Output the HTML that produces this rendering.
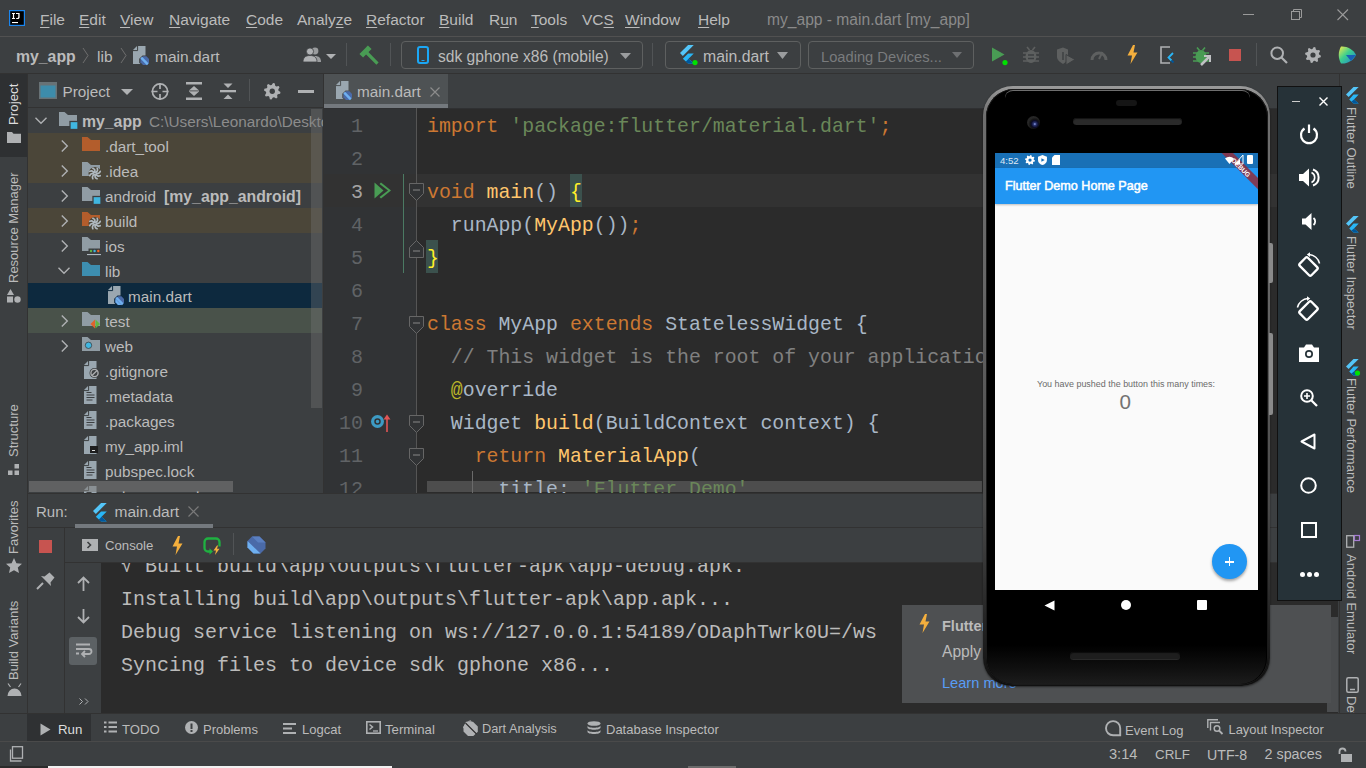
<!DOCTYPE html>
<html><head><meta charset="utf-8">
<style>
*{box-sizing:border-box;margin:0;padding:0}
html,body{width:1366px;height:768px;overflow:hidden;background:#3c3f41;font-family:"Liberation Sans",sans-serif;color:#bbbbbb;position:relative}
.a{position:absolute}
.t{position:absolute;white-space:pre;line-height:1}
.mono{font-family:"Liberation Mono",monospace}
svg{position:absolute;overflow:visible}
</style></head><body>
<div class="a" style="left:0px;top:0px;width:1366px;height:36px;background:#3c3f41;"></div>
<div class="a" style="left:0px;top:36px;width:1366px;height:1px;background:#515151;"></div>
<div class="a" style="left:0px;top:37px;width:1366px;height:36px;background:#3c3f41;"></div>
<div class="a" style="left:0px;top:73px;width:1366px;height:1px;background:#323232;"></div>
<div class="a" style="left:0px;top:74px;width:27px;height:639px;background:#3c3f41;"></div>
<div class="a" style="left:0px;top:74px;width:27px;height:83px;background:#2e3032;"></div>
<div class="a" style="left:27px;top:74px;width:1px;height:639px;background:#323232;"></div>
<div class="a" style="left:28px;top:74px;width:295px;height:419px;background:#3c3f41;"></div>
<div class="a" style="left:28px;top:107px;width:295px;height:1px;background:#323232;"></div>
<div class="a" style="left:323px;top:74px;width:1px;height:420px;background:#323232;"></div>
<div class="a" style="left:324px;top:74px;width:1014px;height:34px;background:#3c3f41;"></div>
<div class="a" style="left:324px;top:108px;width:93px;height:385px;background:#313335;"></div>
<div class="a" style="left:417px;top:108px;width:921px;height:385px;background:#2b2b2b;"></div>
<div class="a" style="left:28px;top:493px;width:1311px;height:1px;background:#323232;"></div>
<div class="a" style="left:28px;top:494px;width:1311px;height:33px;background:#3c3f41;"></div>
<div class="a" style="left:28px;top:527px;width:1310px;height:1px;background:#323232;"></div>
<div class="a" style="left:28px;top:528px;width:36px;height:185px;background:#3c3f41;"></div>
<div class="a" style="left:64px;top:528px;width:1px;height:185px;background:#323232;"></div>
<div class="a" style="left:65px;top:528px;width:1273px;height:34px;background:#3c3f41;"></div>
<div class="a" style="left:65px;top:562px;width:1273px;height:1px;background:#323232;"></div>
<div class="a" style="left:65px;top:563px;width:36px;height:150px;background:#3c3f41;"></div>
<div class="a" style="left:101px;top:563px;width:1237px;height:150px;background:#2b2b2b;"></div>
<div class="a" style="left:0px;top:713px;width:1366px;height:1px;background:#323232;"></div>
<div class="a" style="left:0px;top:714px;width:1366px;height:27px;background:#3c3f41;"></div>
<div class="a" style="left:0px;top:741px;width:1366px;height:1px;background:#4a4a4a;"></div>
<div class="a" style="left:0px;top:742px;width:1366px;height:26px;background:#3c3f41;"></div>
<div class="a" style="left:1339px;top:74px;width:1px;height:639px;background:#323232;"></div>
<div class="a" style="left:1340px;top:74px;width:26px;height:639px;background:#3c3f41;"></div>
<div class="a" style="left:0px;top:766px;width:48px;height:2px;background:#2b2b2b;"></div>
<div class="a" style="left:48px;top:766px;width:344px;height:2px;background:#f0f0f0;"></div>
<div class="a" style="left:688px;top:766px;width:48px;height:2px;background:#6b6b6b;"></div>
<svg style="left:9px;top:10px;" width="16" height="16" viewBox="0 0 16 16"><rect x="0.6" y="0.6" width="14.8" height="14.8" fill="#000" stroke="#1a86f0" stroke-width="1.2"/><path d="M3 3h3v1.1h-0.9v3.8h0.9V9H3V7.9h0.9V4.1H3z" fill="#fff"/><path d="M7 3h3.6v4.3c0 1.2-0.7 1.8-1.9 1.8H7.2V7.9h1.3c0.6 0 0.8-0.3 0.8-0.8V4.1H7z" fill="#fff"/><rect x="3" y="12" width="6" height="1.1" fill="#fff"/></svg>
<div class="t " style="left:40px;top:11.88px;font-size:15.5px;color:#bbbbbb;font-weight:normal;"><u style="text-decoration-thickness:1px;text-underline-offset:2px">F</u>ile</div>
<div class="t " style="left:79px;top:11.88px;font-size:15.5px;color:#bbbbbb;font-weight:normal;"><u style="text-decoration-thickness:1px;text-underline-offset:2px">E</u>dit</div>
<div class="t " style="left:120px;top:11.88px;font-size:15.5px;color:#bbbbbb;font-weight:normal;"><u style="text-decoration-thickness:1px;text-underline-offset:2px">V</u>iew</div>
<div class="t " style="left:169px;top:11.88px;font-size:15.5px;color:#bbbbbb;font-weight:normal;"><u style="text-decoration-thickness:1px;text-underline-offset:2px">N</u>avigate</div>
<div class="t " style="left:246px;top:11.88px;font-size:15.5px;color:#bbbbbb;font-weight:normal;"><u style="text-decoration-thickness:1px;text-underline-offset:2px">C</u>ode</div>
<div class="t " style="left:297px;top:11.88px;font-size:15.5px;color:#bbbbbb;font-weight:normal;">Analy<u style="text-decoration-thickness:1px;text-underline-offset:2px">z</u>e</div>
<div class="t " style="left:366px;top:11.88px;font-size:15.5px;color:#bbbbbb;font-weight:normal;"><u style="text-decoration-thickness:1px;text-underline-offset:2px">R</u>efactor</div>
<div class="t " style="left:439px;top:11.88px;font-size:15.5px;color:#bbbbbb;font-weight:normal;"><u style="text-decoration-thickness:1px;text-underline-offset:2px">B</u>uild</div>
<div class="t " style="left:489px;top:11.88px;font-size:15.5px;color:#bbbbbb;font-weight:normal;">R<u style="text-decoration-thickness:1px;text-underline-offset:2px">u</u>n</div>
<div class="t " style="left:531px;top:11.88px;font-size:15.5px;color:#bbbbbb;font-weight:normal;"><u style="text-decoration-thickness:1px;text-underline-offset:2px">T</u>ools</div>
<div class="t " style="left:582px;top:11.88px;font-size:15.5px;color:#bbbbbb;font-weight:normal;">VC<u style="text-decoration-thickness:1px;text-underline-offset:2px">S</u></div>
<div class="t " style="left:625px;top:11.88px;font-size:15.5px;color:#bbbbbb;font-weight:normal;"><u style="text-decoration-thickness:1px;text-underline-offset:2px">W</u>indow</div>
<div class="t " style="left:698px;top:11.88px;font-size:15.5px;color:#bbbbbb;font-weight:normal;"><u style="text-decoration-thickness:1px;text-underline-offset:2px">H</u>elp</div>
<div class="t " style="left:767px;top:11.79px;font-size:15.6px;color:#8a8a8a;font-weight:normal;">my_app - main.dart [my_app]</div>
<div class="a" style="left:1243px;top:14px;width:11px;height:1px;background:#9a9a9a;"></div>
<svg style="left:1289px;top:8px;" width="14" height="12" viewBox="0 0 14 12"><rect x="2.5" y="3.5" width="8" height="8" fill="none" stroke="#9a9a9a"/><path d="M4.5 3.5V1.5h8v8h-2" fill="none" stroke="#9a9a9a"/></svg>
<svg style="left:1337px;top:9px;" width="12" height="12" viewBox="0 0 12 12"><path d="M0.5 0.5L11 11M11 0.5L0.5 11" stroke="#9a9a9a" stroke-width="1.1"/></svg>
<div class="t " style="left:16px;top:48.63px;font-size:15.8px;color:#bbbbbb;font-weight:bold;">my_app</div>
<svg style="left:82px;top:47px;" width="7" height="17" viewBox="0 0 7 17"><path d="M1 1L6 8.5L1 16" fill="none" stroke="#6e6e6e" stroke-width="1"/></svg>
<div class="t " style="left:97px;top:48.88px;font-size:15.5px;color:#bbbbbb;font-weight:normal;">lib</div>
<svg style="left:120px;top:47px;" width="7" height="17" viewBox="0 0 7 17"><path d="M1 1L6 8.5L1 16" fill="none" stroke="#6e6e6e" stroke-width="1"/></svg>
<svg style="left:133px;top:46px;" width="17" height="19" viewBox="0 0 17 19"><path d="M5 0h7.5v18H0V5z" fill="#9aa7b0"/><path d="M0 4L4 0v4z" fill="#9aa7b0"/><path d="M0 4.6h4.6V0" fill="none" stroke="#3c3f41" stroke-width="1"/><path d="M9.5 9.5h4l3.3 3.3v4l-3.3 3.3h-4l-3.3-3.3v-4z" fill="#3c3f41"/><path d="M10 10.3h3.4l2.6 2.6v3.4l-2.6 2.6H10l-2.6-2.6v-3.4z" fill="#4a6aa8"/><path d="M8.2 11.7l6.6 6.6" stroke="#6fb0f0" stroke-width="2.5"/></svg>
<div class="t " style="left:155px;top:48.88px;font-size:15.5px;color:#bbbbbb;font-weight:normal;">main.dart</div>
<svg style="left:303px;top:47px;" width="19" height="15" viewBox="0 0 19 15"><circle cx="12" cy="4" r="3.4" fill="#9a9c9e"/><path d="M6 15c0-4 2-6 6-6s6 2 6 6z" fill="#9a9c9e"/><circle cx="7" cy="4.5" r="3.6" fill="#afb1b3" stroke="#3c3f41" stroke-width="0.8"/><path d="M0 15c0-4.5 2.5-6.5 7-6.5s7 2 7 6.5z" fill="#afb1b3" stroke="#3c3f41" stroke-width="0.8"/></svg>
<svg style="left:326px;top:54px;" width="10" height="5" viewBox="0 0 10 5"><path d="M0 0h10L5 5z" fill="#afb1b3"/></svg>
<div class="a" style="left:346px;top:43px;width:1px;height:23px;background:#515456;"></div>
<svg style="left:359px;top:46px;" width="19" height="18" viewBox="0 0 19 18"><g transform="translate(6.5,5.5) rotate(-45)"><rect x="-6" y="-2.6" width="12" height="5.2" fill="#499c54"/><rect x="-1.6" y="0" width="3.2" height="17" fill="#499c54"/></g></svg>
<div class="a" style="left:390px;top:43px;width:1px;height:23px;background:#515456;"></div>
<div class="a" style="left:401px;top:41px;width:242px;height:28px;background:transparent;border:1px solid #5e6060;border-radius:4px"></div>
<svg style="left:417px;top:46px;" width="12" height="18" viewBox="0 0 12 18"><rect x="1" y="1" width="10" height="16" rx="2" fill="none" stroke="#1ba7f5" stroke-width="2"/><rect x="4.5" y="14" width="3" height="1" fill="#1ba7f5"/></svg>
<div class="t " style="left:438px;top:48.79px;font-size:15.6px;color:#bbbbbb;font-weight:normal;">sdk gphone x86 (mobile)</div>
<svg style="left:620px;top:53px;" width="11" height="6" viewBox="0 0 11 6"><path d="M0 0h11L5.5 6z" fill="#9a9c9e"/></svg>
<div class="a" style="left:652px;top:43px;width:1px;height:23px;background:#515456;"></div>
<div class="a" style="left:665px;top:41px;width:136px;height:28px;background:transparent;border:1px solid #5e6060;border-radius:4px"></div>
<svg style="left:680px;top:45px;" width="15" height="19" viewBox="0 0 15 19"><g transform="scale(0.95)"><path d="M8.5 0h6L3 11.5 0 8.5z" fill="#54c5f8"/><path d="M8.5 9h6l-5.5 5.5 5.5 5h-6l-5.5-5z" fill="#29b6f6"/><path d="M6 17.5l3-3 5.5 5h-6z" fill="#01579b"/></g><circle cx="15" cy="17.6" r="2.6" fill="#00e000"/></svg>
<div class="t " style="left:703px;top:48.63px;font-size:15.8px;color:#bbbbbb;font-weight:normal;">main.dart</div>
<svg style="left:777px;top:52px;" width="11" height="7" viewBox="0 0 11 7"><path d="M0 0h11L5.5 7z" fill="#9a9c9e"/></svg>
<div class="a" style="left:808px;top:41px;width:166px;height:28px;background:transparent;border:1px solid #5e6060;border-radius:4px"></div>
<div class="t " style="left:821px;top:49.56px;font-size:14.7px;color:#797b7d;font-weight:normal;">Loading Devices...</div>
<svg style="left:952px;top:52px;" width="10" height="6" viewBox="0 0 10 6"><path d="M0 0h10L5 6z" fill="#6e7072"/></svg>
<svg style="left:991px;top:47px;" width="16" height="18" viewBox="0 0 16 18"><path d="M1 0.5L13.5 7.5L1 14.5z" fill="#499c54"/><circle cx="14" cy="15.6" r="2.6" fill="#00e000"/></svg>
<svg style="left:1023px;top:46px;" width="16" height="18" viewBox="0 0 16 18"><path d="M4 1l2.5 3M12 1L9.5 4" stroke="#5e6060" stroke-width="1.6"/><ellipse cx="8" cy="10.5" rx="5.5" ry="6.5" fill="#5e6060"/><path d="M0 7h16M0 11h16M0 15h16" stroke="#5e6060" stroke-width="1.6"/><path d="M5 9h6M5 12.5h6" stroke="#3c3f41" stroke-width="1.3"/></svg>
<svg style="left:1056px;top:47px;" width="19" height="18" viewBox="0 0 19 18"><path d="M1 2.5L7 0.5L12 2.5V10c0 3-2 5-5 7-3-2-6-4-6-7z" fill="#5e6060"/><path d="M7 5v8" stroke="#3c3f41" stroke-width="1.4"/><path d="M10 7.5L19 12.5L10 18z" fill="#5e6060" stroke="#3c3f41" stroke-width="1"/></svg>
<svg style="left:1090px;top:49px;" width="18" height="11" viewBox="0 0 18 11"><path d="M2 11A7 7 0 0 1 16 11" fill="none" stroke="#5e6060" stroke-width="3"/><path d="M9 10L12.5 3" stroke="#5e6060" stroke-width="2"/></svg>
<svg style="left:1127px;top:45px;" width="11" height="19" viewBox="0 0 11 19"><path d="M6 0L0.5 10.5H5L3.5 19L10.5 7.5H6.5L8 0z" fill="#f4af3d"/></svg>
<svg style="left:1160px;top:46px;" width="14" height="18" viewBox="0 0 14 18"><path d="M10 1H1v16h9" fill="none" stroke="#afb1b3" stroke-width="1.6"/><path d="M13 7l-4.5 4.5 3 3" fill="none" stroke="#29b6f6" stroke-width="1.8"/><path d="M11.5 14.5l2 2" stroke="#01579b" stroke-width="1.8"/></svg>
<svg style="left:1193px;top:47px;" width="19" height="18" viewBox="0 0 19 18"><path d="M4 0.5l2.5 3M12 0.5L9.5 3.5" stroke="#499c54" stroke-width="1.6"/><ellipse cx="8" cy="9.5" rx="5.5" ry="6.5" fill="#499c54"/><path d="M0 6h16M0 10h16M0 14h16" stroke="#499c54" stroke-width="1.6"/><path d="M8 18L16 10" stroke="#c0c2c4" stroke-width="2.5"/><path d="M11 9h6v6" fill="none" stroke="#c0c2c4" stroke-width="2"/><path d="M8 12h8v8" fill="#3c3f41" opacity="0"/></svg>
<div class="a" style="left:1229px;top:49px;width:12px;height:12px;background:#c75450;"></div>
<div class="a" style="left:1256px;top:43px;width:1px;height:23px;background:#515456;"></div>
<svg style="left:1270px;top:46px;" width="18" height="18" viewBox="0 0 18 18"><circle cx="7.2" cy="7.2" r="5.8" fill="none" stroke="#afb1b3" stroke-width="2"/><path d="M11.5 11.5L17 17" stroke="#afb1b3" stroke-width="2.2"/></svg>
<svg style="left:1305px;top:47px;" width="16" height="16" viewBox="0 0 16 16"><g transform="scale(1.0)"><polygon points="8.78,0.04 10.32,0.34 10.88,2.62 11.87,3.28 14.18,2.92 15.06,4.23 13.84,6.23 14.07,7.40 15.96,8.78 15.66,10.32 13.38,10.88 12.72,11.87 13.08,14.18 11.77,15.06 9.77,13.84 8.60,14.07 7.22,15.96 5.68,15.66 5.12,13.38 4.13,12.72 1.82,13.08 0.94,11.77 2.16,9.77 1.93,8.60 0.04,7.22 0.34,5.68 2.62,5.12 3.28,4.13 2.92,1.82 4.23,0.94 6.23,2.16 7.40,1.93" fill="#afb1b3"/><circle cx="8" cy="8" r="2.6" fill="#3c3f41"/></g></svg>
<svg style="left:1338px;top:46px;" width="18" height="18" viewBox="0 0 18 18"><defs><linearGradient id="asg" x1="0" y1="0" x2="1" y2="1"><stop offset="0" stop-color="#f6ea4a"/><stop offset="0.45" stop-color="#3ccf8e"/><stop offset="1" stop-color="#1d7fd6"/></linearGradient></defs><path d="M3 0.5C9 0 15 3 18 9 15 15 9 18 3 17.5 0 12 0 6 3 0.5z" fill="url(#asg)"/><path d="M8 9L18 9 13 15z" fill="#1a5fb4"/></svg>
<svg style="left:39px;top:82px;" width="18" height="17" viewBox="0 0 18 17"><rect x="0.75" y="0.75" width="16.5" height="15.5" fill="#3d8cab" stroke="#687276" stroke-width="1.5"/><rect x="0" y="0" width="18" height="3.5" fill="#687276"/></svg>
<div class="t " style="left:62.5px;top:84.05px;font-size:15.3px;color:#bbbbbb;font-weight:normal;">Project</div>
<svg style="left:121px;top:89px;" width="12" height="6" viewBox="0 0 12 6"><path d="M0 0h12L6 6z" fill="#afb1b3"/></svg>
<svg style="left:151px;top:83px;" width="18" height="18" viewBox="0 0 18 18"><circle cx="9" cy="8.5" r="7.6" fill="none" stroke="#afb1b3" stroke-width="1.7"/><path d="M9 0v6M9 11v6M0.5 8.5h6M11.5 8.5h6" stroke="#afb1b3" stroke-width="1.7"/></svg>
<svg style="left:186px;top:82px;" width="16" height="18" viewBox="0 0 16 18"><rect x="0" y="0" width="16" height="2.5" fill="#afb1b3"/><rect x="0" y="15.5" width="16" height="2.5" fill="#afb1b3"/><path d="M3.5 8L8 4L12.5 8z M3.5 10L8 14L12.5 10z" fill="#afb1b3"/><rect x="3" y="8.5" width="10" height="1.2" fill="#afb1b3"/></svg>
<svg style="left:220px;top:83px;" width="16" height="16" viewBox="0 0 16 16"><rect x="0" y="7" width="16" height="2.3" fill="#afb1b3"/><path d="M3.5 0.5h9L8 5z M3.5 16h9L8 11.5z" fill="#afb1b3"/></svg>
<div class="a" style="left:249px;top:79px;width:1px;height:22px;background:#515456;"></div>
<svg style="left:264px;top:83px;" width="16.5" height="16.5" viewBox="0 0 16.5 16.5"><g transform="scale(1.03125)"><polygon points="8.78,0.04 10.32,0.34 10.88,2.62 11.87,3.28 14.18,2.92 15.06,4.23 13.84,6.23 14.07,7.40 15.96,8.78 15.66,10.32 13.38,10.88 12.72,11.87 13.08,14.18 11.77,15.06 9.77,13.84 8.60,14.07 7.22,15.96 5.68,15.66 5.12,13.38 4.13,12.72 1.82,13.08 0.94,11.77 2.16,9.77 1.93,8.60 0.04,7.22 0.34,5.68 2.62,5.12 3.28,4.13 2.92,1.82 4.23,0.94 6.23,2.16 7.40,1.93" fill="#afb1b3"/><circle cx="8" cy="8" r="2.6" fill="#3c3f41"/></g></svg>
<div class="a" style="left:298px;top:90px;width:16px;height:3px;background:#afb1b3;"></div>
<div class="a" style="left:0;top:0;width:323px;height:493px;overflow:hidden">
<svg style="left:35px;top:117px;" width="12" height="8" viewBox="0 0 12 8"><path d="M0.5 0.8L6 6.3L11.5 0.8" fill="none" stroke="#afb1b3" stroke-width="1.4"/></svg>
<svg style="left:59px;top:112px;" width="19" height="18" viewBox="0 0 19 18"><path d="M0 0H5.5L9 3H18V14H0z" fill="#909ca4"/><rect x="11" y="9.5" width="8" height="8" fill="#40b6e0" stroke="#3c3f41" stroke-width="1.3"/></svg>
<div class="t " style="left:82px;top:113.63px;font-size:15.8px;color:#bbbbbb;font-weight:bold;">my_app</div>
<div class="t " style="left:149px;top:114.05px;font-size:15.3px;color:#8c8c8c;font-weight:normal;">C:\Users\Leonardo\Desktop\my_app</div>
<div class="a" style="left:28px;top:133px;width:294px;height:25px;background:#4b4639;"></div>
<svg style="left:61px;top:140px;" width="8" height="12" viewBox="0 0 8 12"><path d="M0.8 0.5L6.3 6L0.8 11.5" fill="none" stroke="#afb1b3" stroke-width="1.4"/></svg>
<svg style="left:82px;top:137px;" width="18" height="14" viewBox="0 0 18 14"><path d="M0 0H5.5L9 3H18V14H0z" fill="#b35d2c"/></svg>
<div class="t " style="left:105px;top:139.05px;font-size:15.3px;color:#bbbbbb;font-weight:normal;">.dart_tool</div>
<div class="a" style="left:28px;top:158px;width:294px;height:25px;background:#4b4639;"></div>
<svg style="left:61px;top:165px;" width="8" height="12" viewBox="0 0 8 12"><path d="M0.8 0.5L6.3 6L0.8 11.5" fill="none" stroke="#afb1b3" stroke-width="1.4"/></svg>
<svg style="left:82px;top:162px;" width="19" height="18" viewBox="0 0 19 18"><path d="M0 0H5.5L9 3H18V14H0z" fill="#909ca4"/><circle cx="13" cy="11.5" r="6.5" fill="#4b4639"/><g transform="translate(13,11.5)"><path d="M0.6 -1.2Q3.4 -2.2 2.2 -5.2" fill="none" stroke="#afb8bf" stroke-width="1.7" stroke-linecap="round" transform="rotate(0)"/><path d="M0.6 -1.2Q3.4 -2.2 2.2 -5.2" fill="none" stroke="#afb8bf" stroke-width="1.7" stroke-linecap="round" transform="rotate(45)"/><path d="M0.6 -1.2Q3.4 -2.2 2.2 -5.2" fill="none" stroke="#afb8bf" stroke-width="1.7" stroke-linecap="round" transform="rotate(90)"/><path d="M0.6 -1.2Q3.4 -2.2 2.2 -5.2" fill="none" stroke="#afb8bf" stroke-width="1.7" stroke-linecap="round" transform="rotate(135)"/><path d="M0.6 -1.2Q3.4 -2.2 2.2 -5.2" fill="none" stroke="#afb8bf" stroke-width="1.7" stroke-linecap="round" transform="rotate(180)"/><path d="M0.6 -1.2Q3.4 -2.2 2.2 -5.2" fill="none" stroke="#afb8bf" stroke-width="1.7" stroke-linecap="round" transform="rotate(225)"/><path d="M0.6 -1.2Q3.4 -2.2 2.2 -5.2" fill="none" stroke="#afb8bf" stroke-width="1.7" stroke-linecap="round" transform="rotate(270)"/><path d="M0.6 -1.2Q3.4 -2.2 2.2 -5.2" fill="none" stroke="#afb8bf" stroke-width="1.7" stroke-linecap="round" transform="rotate(315)"/></g></svg>
<div class="t " style="left:105px;top:164.05px;font-size:15.3px;color:#bbbbbb;font-weight:normal;">.idea</div>
<svg style="left:61px;top:190px;" width="8" height="12" viewBox="0 0 8 12"><path d="M0.8 0.5L6.3 6L0.8 11.5" fill="none" stroke="#afb1b3" stroke-width="1.4"/></svg>
<svg style="left:82px;top:187px;" width="19" height="18" viewBox="0 0 19 18"><path d="M0 0H5.5L9 3H18V14H0z" fill="#909ca4"/><rect x="11" y="9.5" width="8" height="8" fill="#40b6e0" stroke="#3c3f41" stroke-width="1.3"/></svg>
<div class="t " style="left:105px;top:189.05px;font-size:15.3px;color:#bbbbbb;font-weight:normal;">android</div>
<div class="t " style="left:164px;top:188.63px;font-size:15.8px;color:#bbbbbb;font-weight:bold;">[my_app_android]</div>
<div class="a" style="left:28px;top:208px;width:294px;height:25px;background:#4b4639;"></div>
<svg style="left:61px;top:215px;" width="8" height="12" viewBox="0 0 8 12"><path d="M0.8 0.5L6.3 6L0.8 11.5" fill="none" stroke="#afb1b3" stroke-width="1.4"/></svg>
<svg style="left:82px;top:212px;" width="19" height="18" viewBox="0 0 19 18"><path d="M0 0H5.5L9 3H18V14H0z" fill="#b35d2c"/><circle cx="13" cy="11.5" r="6.5" fill="#4b4639"/><g transform="translate(13,11.5)"><path d="M0.6 -1.2Q3.4 -2.2 2.2 -5.2" fill="none" stroke="#afb8bf" stroke-width="1.7" stroke-linecap="round" transform="rotate(0)"/><path d="M0.6 -1.2Q3.4 -2.2 2.2 -5.2" fill="none" stroke="#afb8bf" stroke-width="1.7" stroke-linecap="round" transform="rotate(45)"/><path d="M0.6 -1.2Q3.4 -2.2 2.2 -5.2" fill="none" stroke="#afb8bf" stroke-width="1.7" stroke-linecap="round" transform="rotate(90)"/><path d="M0.6 -1.2Q3.4 -2.2 2.2 -5.2" fill="none" stroke="#afb8bf" stroke-width="1.7" stroke-linecap="round" transform="rotate(135)"/><path d="M0.6 -1.2Q3.4 -2.2 2.2 -5.2" fill="none" stroke="#afb8bf" stroke-width="1.7" stroke-linecap="round" transform="rotate(180)"/><path d="M0.6 -1.2Q3.4 -2.2 2.2 -5.2" fill="none" stroke="#afb8bf" stroke-width="1.7" stroke-linecap="round" transform="rotate(225)"/><path d="M0.6 -1.2Q3.4 -2.2 2.2 -5.2" fill="none" stroke="#afb8bf" stroke-width="1.7" stroke-linecap="round" transform="rotate(270)"/><path d="M0.6 -1.2Q3.4 -2.2 2.2 -5.2" fill="none" stroke="#afb8bf" stroke-width="1.7" stroke-linecap="round" transform="rotate(315)"/></g></svg>
<div class="t " style="left:105px;top:214.05px;font-size:15.3px;color:#bbbbbb;font-weight:normal;">build</div>
<svg style="left:61px;top:240px;" width="8" height="12" viewBox="0 0 8 12"><path d="M0.8 0.5L6.3 6L0.8 11.5" fill="none" stroke="#afb1b3" stroke-width="1.4"/></svg>
<svg style="left:82px;top:237px;" width="19" height="18" viewBox="0 0 19 18"><path d="M0 0H5.5L9 3H18V11.5H6.5V14H0z" fill="#909ca4"/><circle cx="9" cy="14" r="1.2" fill="#62b543"/><circle cx="12.6" cy="14" r="1.2" fill="#40b6e0"/><circle cx="16.3" cy="14" r="1.2" fill="#f26522"/><rect x="5" y="17" width="14" height="1.1" fill="#afb8bf"/></svg>
<div class="t " style="left:105px;top:239.05px;font-size:15.3px;color:#bbbbbb;font-weight:normal;">ios</div>
<svg style="left:58px;top:267px;" width="12" height="8" viewBox="0 0 12 8"><path d="M0.5 0.8L6 6.3L11.5 0.8" fill="none" stroke="#afb1b3" stroke-width="1.4"/></svg>
<svg style="left:82px;top:262px;" width="18" height="14" viewBox="0 0 18 14"><path d="M0 0H5.5L9 3H18V14H0z" fill="#3d8eb0"/></svg>
<div class="t " style="left:105px;top:264.05px;font-size:15.3px;color:#bbbbbb;font-weight:normal;">lib</div>
<div class="a" style="left:28px;top:283px;width:294px;height:25px;background:#0d293e;"></div>
<svg style="left:108px;top:286px;" width="17" height="19" viewBox="0 0 17 19"><path d="M5 0h7.5v18H0V5z" fill="#9aa7b0"/><path d="M0 4L4 0v4z" fill="#9aa7b0"/><path d="M0 4.6h4.6V0" fill="none" stroke="#0d293e" stroke-width="1"/><path d="M9.5 9.5h4l3.3 3.3v4l-3.3 3.3h-4l-3.3-3.3v-4z" fill="#0d293e"/><path d="M10 10.3h3.4l2.6 2.6v3.4l-2.6 2.6H10l-2.6-2.6v-3.4z" fill="#4a6aa8"/><path d="M7.4 12.9L13.4 18.9H10l-2.6-2.6z M10 10.3L16 16.3" fill="#6fb0f0"/><path d="M8.2 11.7l6.6 6.6" stroke="#6fb0f0" stroke-width="2.5"/></svg>
<div class="t " style="left:128px;top:289.05px;font-size:15.3px;color:#bbbbbb;font-weight:normal;">main.dart</div>
<div class="a" style="left:28px;top:308px;width:294px;height:25px;background:#49524a;"></div>
<svg style="left:61px;top:315px;" width="8" height="12" viewBox="0 0 8 12"><path d="M0.8 0.5L6.3 6L0.8 11.5" fill="none" stroke="#afb1b3" stroke-width="1.4"/></svg>
<svg style="left:82px;top:312px;" width="19" height="17" viewBox="0 0 19 17"><path d="M0 0H5.5L9 3H18V14H0z" fill="#909ca4"/><path d="M13 7.5L8.5 12L13 16.5z" fill="#e0622d"/><path d="M13.5 7.5L18 12L13.5 16.5z" fill="#62b543"/></svg>
<div class="t " style="left:105px;top:314.05px;font-size:15.3px;color:#bbbbbb;font-weight:normal;">test</div>
<svg style="left:61px;top:340px;" width="8" height="12" viewBox="0 0 8 12"><path d="M0.8 0.5L6.3 6L0.8 11.5" fill="none" stroke="#afb1b3" stroke-width="1.4"/></svg>
<svg style="left:82px;top:337px;" width="18" height="14" viewBox="0 0 18 14"><path d="M0 0H5.5L9 3H18V14H0z" fill="#909ca4"/><circle cx="6.5" cy="8.3" r="3.2" fill="#40b6e0" stroke="#3c3f41" stroke-width="0.8"/></svg>
<div class="t " style="left:105px;top:339.05px;font-size:15.3px;color:#bbbbbb;font-weight:normal;">web</div>
<svg style="left:84px;top:361px;" width="16" height="18" viewBox="0 0 16 18"><path d="M5 0h7.5v18H0V5z" fill="#9aa7b0"/><path d="M0 4L4 0v4z" fill="#9aa7b0"/><path d="M0 4.6h4.6V0" fill="none" stroke="#3c3f41" stroke-width="1"/><circle cx="10.5" cy="12" r="5" fill="#3c3f41"/><circle cx="10.5" cy="12" r="3.6" fill="none" stroke="#afb1b3" stroke-width="1.3"/><path d="M8 14.5l5-5" stroke="#afb1b3" stroke-width="1.3"/></svg>
<div class="t " style="left:105px;top:364.05px;font-size:15.3px;color:#bbbbbb;font-weight:normal;">.gitignore</div>
<svg style="left:84px;top:386px;" width="13" height="18" viewBox="0 0 13 18"><path d="M5 0h7.5v18H0V5z" fill="#9aa7b0"/><path d="M0 4L4 0v4z" fill="#9aa7b0"/><path d="M0 4.6h4.6V0" fill="none" stroke="#3c3f41" stroke-width="1"/><path d="M2.5 6.5h5M2.5 9h8M2.5 11.5h8M2.5 14h6" stroke="#3c3f41" stroke-width="1.2"/></svg>
<div class="t " style="left:105px;top:389.05px;font-size:15.3px;color:#bbbbbb;font-weight:normal;">.metadata</div>
<svg style="left:84px;top:411px;" width="13" height="18" viewBox="0 0 13 18"><path d="M5 0h7.5v18H0V5z" fill="#9aa7b0"/><path d="M0 4L4 0v4z" fill="#9aa7b0"/><path d="M0 4.6h4.6V0" fill="none" stroke="#3c3f41" stroke-width="1"/><path d="M2.5 6.5h5M2.5 9h8M2.5 11.5h8M2.5 14h6" stroke="#3c3f41" stroke-width="1.2"/></svg>
<div class="t " style="left:105px;top:414.05px;font-size:15.3px;color:#bbbbbb;font-weight:normal;">.packages</div>
<svg style="left:84px;top:436px;" width="16" height="18" viewBox="0 0 16 18"><path d="M5 0h7.5v18H0V5z" fill="#9aa7b0"/><path d="M0 4L4 0v4z" fill="#9aa7b0"/><path d="M0 4.6h4.6V0" fill="none" stroke="#3c3f41" stroke-width="1"/><rect x="6" y="10" width="8" height="7" fill="#1e1e1e"/><rect x="8" y="14" width="3" height="1" fill="#ddd"/></svg>
<div class="t " style="left:105px;top:439.05px;font-size:15.3px;color:#bbbbbb;font-weight:normal;">my_app.iml</div>
<svg style="left:84px;top:461px;" width="13" height="18" viewBox="0 0 13 18"><path d="M5 0h7.5v18H0V5z" fill="#9aa7b0"/><path d="M0 4L4 0v4z" fill="#9aa7b0"/><path d="M0 4.6h4.6V0" fill="none" stroke="#3c3f41" stroke-width="1"/><path d="M2.5 6.5h5M2.5 9h8M2.5 11.5h8M2.5 14h6" stroke="#3c3f41" stroke-width="1.2"/></svg>
<div class="t " style="left:105px;top:464.05px;font-size:15.3px;color:#bbbbbb;font-weight:normal;">pubspec.lock</div>
<svg style="left:84px;top:486px;" width="13" height="18" viewBox="0 0 13 18"><path d="M5 0h7.5v18H0V5z" fill="#9aa7b0"/><path d="M0 4L4 0v4z" fill="#9aa7b0"/><path d="M0 4.6h4.6V0" fill="none" stroke="#3c3f41" stroke-width="1"/><path d="M2.5 6.5h5M2.5 9h8M2.5 11.5h8M2.5 14h6" stroke="#3c3f41" stroke-width="1.2"/></svg>
<div class="t " style="left:105px;top:489.05px;font-size:15.3px;color:#bbbbbb;font-weight:normal;">pubspec.yaml</div>
</div>
<div class="a" style="left:311px;top:109px;width:11px;height:299px;background:rgba(120,120,120,0.35);"></div>
<div class="a" style="left:29px;top:481px;width:204px;height:11px;background:rgba(125,125,125,0.55);"></div>
<div class="a" style="left:28px;top:483px;width:294px;height:9px;background:transparent;"></div>
<div class="a" style="left:323px;top:74px;width:1px;height:420px;background:#323232;"></div>
<div class="a" style="left:324px;top:74px;width:124px;height:34px;background:#4e5254;"></div>
<div class="a" style="left:324px;top:104px;width:124px;height:4px;background:#74797e;"></div>
<div class="a" style="left:324px;top:108px;width:1014px;height:1px;background:#2f3032;"></div>
<svg style="left:336px;top:81px;" width="17" height="19" viewBox="0 0 17 19"><path d="M5 0h7.5v18H0V5z" fill="#9aa7b0"/><path d="M0 4L4 0v4z" fill="#9aa7b0"/><path d="M0 4.6h4.6V0" fill="none" stroke="#4e5254" stroke-width="1"/><path d="M9.5 9.5h4l3.3 3.3v4l-3.3 3.3h-4l-3.3-3.3v-4z" fill="#4e5254"/><path d="M10 10.3h3.4l2.6 2.6v3.4l-2.6 2.6H10l-2.6-2.6v-3.4z" fill="#4a6aa8"/><path d="M8.2 11.7l6.6 6.6" stroke="#6fb0f0" stroke-width="2.5"/></svg>
<div class="t " style="left:357px;top:84.05px;font-size:15.3px;color:#bbbbbb;font-weight:normal;">main.dart</div>
<svg style="left:430px;top:87px;" width="10" height="10" viewBox="0 0 10 10"><path d="M0.5 0.5L9.5 9.5M9.5 0.5L0.5 9.5" stroke="#8c8c8c" stroke-width="1.2"/></svg>
<div class="a" style="left:324px;top:174px;width:1014px;height:33px;background:#323232;"></div>
<div class="a" style="left:0;top:0;width:1366px;height:493px;overflow:hidden">
<div class="t mono" style="left:351px;top:116.67px;font-size:20px;color:#606366;font-weight:normal;">1</div>
<div class="t mono" style="left:351px;top:149.67px;font-size:20px;color:#606366;font-weight:normal;">2</div>
<div class="t mono" style="left:351px;top:182.67px;font-size:20px;color:#a4a3a3;font-weight:normal;">3</div>
<div class="t mono" style="left:351px;top:215.67px;font-size:20px;color:#606366;font-weight:normal;">4</div>
<div class="t mono" style="left:351px;top:248.67px;font-size:20px;color:#606366;font-weight:normal;">5</div>
<div class="t mono" style="left:351px;top:281.67px;font-size:20px;color:#606366;font-weight:normal;">6</div>
<div class="t mono" style="left:351px;top:314.67px;font-size:20px;color:#606366;font-weight:normal;">7</div>
<div class="t mono" style="left:351px;top:347.67px;font-size:20px;color:#606366;font-weight:normal;">8</div>
<div class="t mono" style="left:351px;top:380.67px;font-size:20px;color:#606366;font-weight:normal;">9</div>
<div class="t mono" style="left:339px;top:413.67px;font-size:20px;color:#606366;font-weight:normal;">10</div>
<div class="t mono" style="left:339px;top:446.67px;font-size:20px;color:#606366;font-weight:normal;">11</div>
<div class="t mono" style="left:339px;top:479.67px;font-size:20px;color:#606366;font-weight:normal;">12</div>
</div>
<div class="a" style="left:416px;top:108px;width:1px;height:385px;background:#555555;"></div>
<svg style="left:409px;top:183px;" width="16" height="18" viewBox="0 0 16 18"><path d="M0.5 0.5h14v10l-7 7-7-7z" fill="#313335" stroke="#666" stroke-width="1"/><path d="M4 7h7" stroke="#888" stroke-width="1"/></svg>
<svg style="left:409px;top:240px;" width="16" height="18" viewBox="0 0 16 18"><path d="M0.5 17.5h14v-10l-7-7-7 7z" fill="#313335" stroke="#666" stroke-width="1"/><path d="M4 11h7" stroke="#888" stroke-width="1"/></svg>
<svg style="left:409px;top:316px;" width="16" height="18" viewBox="0 0 16 18"><path d="M0.5 0.5h14v10l-7 7-7-7z" fill="#313335" stroke="#666" stroke-width="1"/><path d="M4 7h7" stroke="#888" stroke-width="1"/></svg>
<svg style="left:409px;top:415px;" width="16" height="18" viewBox="0 0 16 18"><path d="M0.5 0.5h14v10l-7 7-7-7z" fill="#313335" stroke="#666" stroke-width="1"/><path d="M4 7h7" stroke="#888" stroke-width="1"/></svg>
<svg style="left:409px;top:448px;" width="16" height="18" viewBox="0 0 16 18"><path d="M0.5 0.5h14v10l-7 7-7-7z" fill="#313335" stroke="#666" stroke-width="1"/><path d="M4 7h7" stroke="#888" stroke-width="1"/></svg>
<div class="a" style="left:403px;top:174px;width:1px;height:99px;background:#4b7a63;"></div>
<svg style="left:374px;top:182px;" width="18" height="17" viewBox="0 0 18 17"><path d="M0.5 0.5L9.5 8.5L0.5 16.5z" fill="#499c54"/><path d="M7 0.5L17 8.5L7 16.5L5.5 15L14 8.5L5.5 2z" fill="#499c54"/></svg>
<svg style="left:370px;top:413px;" width="20" height="20" viewBox="0 0 20 20"><circle cx="7.5" cy="8.5" r="6.5" fill="#3d9bc4"/><circle cx="7.5" cy="8.5" r="2.5" fill="none" stroke="#313335" stroke-width="1.5"/><path d="M17 19V3" stroke="#e05555" stroke-width="1.6"/><path d="M13.5 6.5L17 1.5L20.5 6.5z" fill="#e05555"/></svg>
<div class="a" style="left:570px;top:174px;width:12px;height:33px;background:#3b514d;"></div>
<div class="a" style="left:426px;top:240px;width:12px;height:33px;background:#3b514d;"></div>
<div class="a" style="left:427px;top:481px;width:555px;height:11px;background:#4d4d4d;"></div>
<div class="a" style="left:417px;top:108px;width:921px;height:385px;overflow:hidden">
<div class="t mono" style="left:10px;top:8.78px;font-size:19.85px"><span style="color:#cc7832">import </span><span style="color:#6a8759">&#x27;package:flutter/material.dart&#x27;</span><span style="color:#cc7832">;</span></div>
<div class="t mono" style="left:10px;top:74.78px;font-size:19.85px"><span style="color:#cc7832">void </span><span style="color:#ffc66d">main</span><span style="color:#a9b7c6">() </span><span style="color:#ffef28">{</span></div>
<div class="t mono" style="left:10px;top:107.78px;font-size:19.85px"><span style="color:#a9b7c6">  runApp(</span><span style="color:#ffc66d">MyApp</span><span style="color:#a9b7c6">())</span><span style="color:#cc7832">;</span></div>
<div class="t mono" style="left:10px;top:140.78px;font-size:19.85px"><span style="color:#ffef28">}</span></div>
<div class="t mono" style="left:10px;top:206.78px;font-size:19.85px"><span style="color:#cc7832">class </span><span style="color:#a9b7c6">MyApp </span><span style="color:#cc7832">extends </span><span style="color:#a9b7c6">StatelessWidget {</span></div>
<div class="t mono" style="left:10px;top:239.78px;font-size:19.85px"><span style="color:#808080">  // This widget is the root of your application.</span></div>
<div class="t mono" style="left:10px;top:272.78px;font-size:19.85px"><span style="color:#a9b7c6">  </span><span style="color:#bbb529">@</span><span style="color:#a9b7c6">override</span></div>
<div class="t mono" style="left:10px;top:305.78px;font-size:19.85px"><span style="color:#a9b7c6">  Widget </span><span style="color:#ffc66d">build</span><span style="color:#a9b7c6">(BuildContext context) {</span></div>
<div class="t mono" style="left:10px;top:338.78px;font-size:19.85px"><span style="color:#a9b7c6">    </span><span style="color:#cc7832">return </span><span style="color:#ffc66d">MaterialApp</span><span style="color:#a9b7c6">(</span></div>
<div class="t mono" style="left:10px;top:371.78px;font-size:19.85px"><span style="color:#a9b7c6">      title: </span><span style="color:#6a8759">&#x27;Flutter Demo&#x27;</span></div>
</div>
<div class="a" style="left:472px;top:471px;width:1px;height:22px;background:#6a6a6a;"></div>
<div class="t " style="left:36px;top:504.30px;font-size:15px;color:#bbbbbb;font-weight:normal;">Run:</div>
<svg style="left:93px;top:503px;" width="15" height="19" viewBox="0 0 15 19"><g transform="scale(0.95)"><path d="M8.5 0h6L3 11.5 0 8.5z" fill="#54c5f8"/><path d="M8.5 9h6l-5.5 5.5 5.5 5h-6l-5.5-5z" fill="#29b6f6"/><path d="M6 17.5l3-3 5.5 5h-6z" fill="#01579b"/></g></svg>
<div class="t " style="left:114.5px;top:503.88px;font-size:15.5px;color:#bbbbbb;font-weight:normal;">main.dart</div>
<svg style="left:188px;top:506px;" width="11" height="11" viewBox="0 0 11 11"><path d="M0.5 0.5L10.5 10.5M10.5 0.5L0.5 10.5" stroke="#7a7a7a" stroke-width="1.2"/></svg>
<div class="a" style="left:75px;top:524px;width:138px;height:4px;background:#74797e;"></div>
<div class="a" style="left:39px;top:540px;width:13px;height:13px;background:#c75450;"></div>
<svg style="left:36px;top:572px;" width="19" height="18" viewBox="0 0 19 18"><path d="M1 17L7 11" stroke="#afb1b3" stroke-width="2"/><path d="M8.5 4.5L13.5 0.5L18.5 5.5L14.5 10.5L15 14L5 4z" fill="#afb1b3"/></svg>
<svg style="left:82px;top:539px;" width="16" height="12" viewBox="0 0 16 12"><rect width="16" height="12" fill="#afb1b3"/><path d="M5.5 3L8.5 6L5.5 9" fill="none" stroke="#3c3f41" stroke-width="1.6"/></svg>
<div class="t " style="left:105px;top:538.83px;font-size:13.2px;color:#bbbbbb;font-weight:normal;">Console</div>
<svg style="left:172px;top:536px;" width="11" height="19" viewBox="0 0 11 19"><path d="M6 0L0.5 10.5H5L3.5 19L10.5 7.5H6.5L8 0z" fill="#f4af3d"/></svg>
<svg style="left:202px;top:537px;" width="19" height="18" viewBox="0 0 19 18"><path d="M8.5 14.5H6A3.5 3.5 0 0 1 2.5 11V5A3.5 3.5 0 0 1 6 1.5h8A3.5 3.5 0 0 1 17.5 5v4.5" fill="none" stroke="#1fb141" stroke-width="2.3"/><path d="M7.5 11.3L11 14.5L7.5 17.7z" fill="#1fb141"/><path d="M15 8.5L11.5 13.5H14L13 18L17.5 11.8H15L16 8.5z" fill="#f4af3d"/></svg>
<div class="a" style="left:233px;top:533px;width:1px;height:22px;background:#515456;"></div>
<svg style="left:247px;top:536px;" width="19" height="18" viewBox="0 0 19 18"><path d="M5 0.5h7.5l6 6v6l-5 5H6.5L0.5 11.5V5z" fill="#4a6aa8"/><path d="M0.5 5L13.5 17.5H6.5L0.5 11.5z" fill="#6fb0f0"/><path d="M5 0.5h7.5l6 6H11z" fill="#5a7fc0"/></svg>
<svg style="left:77px;top:576px;" width="13" height="15" viewBox="0 0 13 15"><path d="M6.5 15V1.5M1 7L6.5 1.5L12 7" fill="none" stroke="#afb1b3" stroke-width="1.8"/></svg>
<svg style="left:77px;top:609px;" width="13" height="15" viewBox="0 0 13 15"><path d="M6.5 0V13.5M1 8L6.5 13.5L12 8" fill="none" stroke="#afb1b3" stroke-width="1.8"/></svg>
<div class="a" style="left:69px;top:637px;width:28px;height:28px;background:#5c6164;border-radius:3px"></div>
<svg style="left:75px;top:643px;" width="16" height="16" viewBox="0 0 16 16"><path d="M1 1.5h14M1 6h13M1 10.5h3" stroke="#afb1b3" stroke-width="1.8"/><path d="M14 6c2 0 2.5 1.5 2.5 2.5S15.5 11 14 11H8" fill="none" stroke="#afb1b3" stroke-width="1.8"/><path d="M10 8L7 11l3 3" fill="none" stroke="#afb1b3" stroke-width="1.8"/></svg>
<svg style="left:79px;top:698px;" width="11" height="7" viewBox="0 0 11 7"><path d="M0.5 0.5L3.5 3.5L0.5 6.5M6 0.5L9 3.5L6 6.5" fill="none" stroke="#afb1b3" stroke-width="1"/></svg>
<div class="a" style="left:101px;top:563px;width:1237px;height:150px;overflow:hidden">
<div class="t mono" style="left:20px;top:-6.33px;font-size:20px;color:#bbbbbb">√ Built build\app\outputs\flutter-apk\app-debug.apk.</div>
<div class="t mono" style="left:20px;top:26.67px;font-size:20px;color:#bbbbbb">Installing build\app\outputs\flutter-apk\app.apk...</div>
<div class="t mono" style="left:20px;top:59.67px;font-size:20px;color:#bbbbbb">Debug service listening on ws://127.0.0.1:54189/ODaphTwrk0U=/ws</div>
<div class="t mono" style="left:20px;top:92.67px;font-size:20px;color:#bbbbbb">Syncing files to device sdk gphone x86...</div>
</div>
<div class="a" style="left:27px;top:714px;width:64px;height:27px;background:#2f3133;"></div>
<svg style="left:40px;top:723px;" width="11" height="13" viewBox="0 0 11 13"><path d="M0.5 0.5L10.5 6.5L0.5 12.5z" fill="#afb1b3"/></svg>
<div class="t " style="left:58px;top:722.74px;font-size:13.3px;color:#dddddd;font-weight:normal;">Run</div>
<svg style="left:104px;top:721px;" width="13" height="13" viewBox="0 0 13 13"><path d="M0 1.5h2.5M0 6h2.5M0 10.5h2.5M4.5 1.5H13M4.5 6H13M4.5 10.5H13" stroke="#afb1b3" stroke-width="2.2"/></svg>
<div class="t " style="left:122px;top:722.91px;font-size:13.1px;color:#bbbbbb;font-weight:normal;">TODO</div>
<svg style="left:185px;top:721px;" width="13" height="13" viewBox="0 0 13 13"><circle cx="6.5" cy="6.5" r="6.5" fill="#afb1b3"/><rect x="5.5" y="2.5" width="2" height="5.5" fill="#3c3f41"/><rect x="5.5" y="9" width="2" height="2" fill="#3c3f41"/></svg>
<div class="t " style="left:203px;top:723.00px;font-size:13px;color:#bbbbbb;font-weight:normal;">Problems</div>
<svg style="left:283px;top:723px;" width="13" height="11" viewBox="0 0 13 11"><path d="M0 1h13M0 5.5h9M0 10h13" stroke="#afb1b3" stroke-width="2"/></svg>
<div class="t " style="left:302px;top:723.00px;font-size:13px;color:#bbbbbb;font-weight:normal;">Logcat</div>
<svg style="left:366px;top:721px;" width="15" height="13" viewBox="0 0 15 13"><rect x="0.8" y="0.8" width="13.4" height="11.4" fill="none" stroke="#afb1b3" stroke-width="1.6"/><path d="M3.5 3.5L6.5 6L3.5 8.5" fill="none" stroke="#afb1b3" stroke-width="1.5"/><path d="M7 10h5" stroke="#afb1b3" stroke-width="1.3"/></svg>
<div class="t " style="left:385px;top:722.83px;font-size:13.2px;color:#bbbbbb;font-weight:normal;">Terminal</div>
<svg style="left:462px;top:720px;" width="17" height="16" viewBox="0 0 17 16"><path d="M5 1.5L8.5 0.3 10 1.7H6z" fill="#afb1b3"/><path d="M4 1.8h7l4.8 4.8v5.2L11.3 16H6L1.5 11.5V6.5z" fill="#afb1b3"/><path d="M3.3 3.8L1 7.5 2.8 9.3z" fill="#afb1b3"/><path d="M3.5 3L14.5 14" stroke="#2b2b2b" stroke-width="1.1"/></svg>
<div class="t " style="left:482px;top:723.16px;font-size:12.8px;color:#bbbbbb;font-weight:normal;">Dart Analysis</div>
<svg style="left:587px;top:721px;" width="14" height="15" viewBox="0 0 14 15"><ellipse cx="7" cy="2.5" rx="6.5" ry="2.3" fill="#afb1b3"/><path d="M0.5 4.5v2c0 1.3 3 2.3 6.5 2.3s6.5-1 6.5-2.3v-2c0 1.3-3 2.3-6.5 2.3S0.5 5.8 0.5 4.5z" fill="#afb1b3"/><path d="M0.5 8.8v2c0 1.3 3 2.3 6.5 2.3s6.5-1 6.5-2.3v-2c0 1.3-3 2.3-6.5 2.3S0.5 10.1 0.5 8.8z" fill="#afb1b3"/></svg>
<div class="t " style="left:606px;top:723.00px;font-size:13px;color:#bbbbbb;font-weight:normal;">Database Inspector</div>
<svg style="left:1105px;top:720px;" width="17" height="17" viewBox="0 0 17 17"><path d="M15.2 8.2A7.1 7.1 0 1 0 8.1 15.3H15.2Z" fill="none" stroke="#afb1b3" stroke-width="1.9"/></svg>
<div class="t " style="left:1125px;top:723.50px;font-size:13px;color:#bbbbbb;font-weight:normal;">Event Log</div>
<svg style="left:1207px;top:719px;" width="17" height="16" viewBox="0 0 17 16"><path d="M0.8 9V0.8H11" fill="none" stroke="#afb1b3" stroke-width="1.4"/><path d="M3.5 11.5V3.5H13" fill="none" stroke="#afb1b3" stroke-width="1.4"/><circle cx="10" cy="9.5" r="2.8" fill="none" stroke="#afb1b3" stroke-width="1.5"/><path d="M12 11.5l3.5 3.5" stroke="#afb1b3" stroke-width="1.8"/></svg>
<div class="t " style="left:1228.5px;top:723.58px;font-size:12.9px;color:#bbbbbb;font-weight:normal;">Layout Inspector</div>
<svg style="left:7px;top:746px;" width="16" height="16" viewBox="0 0 16 16"><path d="M3.5 3.5v11.5h11" fill="none" stroke="#afb1b3" stroke-width="1.3"/><rect x="5.5" y="0.7" width="10" height="11.5" fill="none" stroke="#afb1b3" stroke-width="1.3"/></svg>
<div class="t " style="left:1109px;top:747.24px;font-size:14.6px;color:#bbbbbb;font-weight:normal;">3:14</div>
<div class="t " style="left:1155px;top:748.26px;font-size:13.4px;color:#bbbbbb;font-weight:normal;">CRLF</div>
<div class="t " style="left:1207px;top:747.58px;font-size:14.2px;color:#bbbbbb;font-weight:normal;">UTF-8</div>
<div class="t " style="left:1264.5px;top:747.45px;font-size:14.35px;color:#bbbbbb;font-weight:normal;">2 spaces</div>
<svg style="left:1337px;top:748px;" width="15" height="14" viewBox="0 0 15 14"><path d="M2.5 6V3.5a3 3 0 0 1 6 0" fill="none" stroke="#afb1b3" stroke-width="1.8"/><rect x="4" y="6" width="11" height="8" fill="#afb1b3"/></svg>
<div class="a" style="left:0;top:74px;width:27px;height:639px;overflow:hidden"><div class="a" style="left:0;top:-74px;width:1366px;height:768px">
<div class="t" style="left:7px;top:125px;font-size:13.3px;color:#dddddd;transform-origin:0 0;transform:rotate(-90deg)">Project</div>
<svg style="left:7px;top:132px;" width="14" height="11" viewBox="0 0 14 11"><path d="M0 0h5l1.5 1.8H14V11H0z" fill="#afb1b3"/></svg>
<div class="t" style="left:7px;top:283px;font-size:13px;color:#bbbbbb;transform-origin:0 0;transform:rotate(-90deg)">Resource Manager</div>
<svg style="left:7px;top:289px;" width="14" height="14" viewBox="0 0 14 14"><path d="M3.5 0L7 6H0z" fill="#afb1b3"/><rect x="0" y="7.5" width="6" height="6" fill="#afb1b3"/><circle cx="10.5" cy="10.5" r="3.2" fill="#afb1b3"/></svg>
<div class="t" style="left:7px;top:457px;font-size:13px;color:#bbbbbb;transform-origin:0 0;transform:rotate(-90deg)">Structure</div>
<svg style="left:8px;top:464px;" width="12" height="11" viewBox="0 0 12 11"><rect x="6.5" y="0" width="4.5" height="4.5" fill="#afb1b3"/><rect x="0" y="6.5" width="4.5" height="4.5" fill="#afb1b3"/><rect x="6.5" y="6.5" width="4.5" height="4.5" fill="#afb1b3"/></svg>
<div class="t" style="left:7px;top:554px;font-size:13px;color:#bbbbbb;transform-origin:0 0;transform:rotate(-90deg)">Favorites</div>
<svg style="left:6px;top:558px;" width="16" height="15" viewBox="0 0 16 15"><path d="M8 0l2.4 5.2 5.6.6-4.2 3.8 1.2 5.5L8 12.3l-5 2.8 1.2-5.5L0 5.8l5.6-.6z" fill="#afb1b3"/></svg>
<div class="t" style="left:7px;top:680px;font-size:13px;color:#bbbbbb;transform-origin:0 0;transform:rotate(-90deg)">Build Variants</div>
<svg style="left:7px;top:683px;" width="15" height="13" viewBox="0 0 15 13"><path d="M1 0.5L3.5 4M14 0.5L11.5 4" stroke="#afb1b3" stroke-width="1.2"/><path d="M0.5 13a7 7.5 0 0 1 14 0z" fill="#afb1b3"/></svg>
</div></div>
<div class="a" style="left:1340px;top:74px;width:26px;height:639px;overflow:hidden"><div class="a" style="left:-1340px;top:-74px;width:1366px;height:768px">
<svg style="left:1346px;top:87px;" width="13" height="16" viewBox="0 0 13 16"><path d="M7.5 0h5.2L2.6 10 0 7.4z" fill="#54c5f8"/><path d="M7.5 7.6h5.2L8 12.4l4.7 4.1H7.5L3.2 12.4z" fill="#29b6f6"/><path d="M5.4 14.6L8 12.4l4.7 4.1H7.5z" fill="#01579b"/></svg>
<div class="t" style="left:1358px;top:107px;font-size:13px;color:#bbbbbb;transform-origin:0 0;transform:rotate(90deg)">Flutter Outline</div>
<svg style="left:1346px;top:216px;" width="13" height="16" viewBox="0 0 13 16"><path d="M7.5 0h5.2L2.6 10 0 7.4z" fill="#54c5f8"/><path d="M7.5 7.6h5.2L8 12.4l4.7 4.1H7.5L3.2 12.4z" fill="#29b6f6"/><path d="M5.4 14.6L8 12.4l4.7 4.1H7.5z" fill="#01579b"/></svg>
<div class="t" style="left:1358px;top:236px;font-size:13px;color:#bbbbbb;transform-origin:0 0;transform:rotate(90deg)">Flutter Inspector</div>
<svg style="left:1346px;top:359px;" width="13" height="16" viewBox="0 0 13 16"><path d="M7.5 0h5.2L2.6 10 0 7.4z" fill="#54c5f8"/><path d="M7.5 7.6h5.2L8 12.4l4.7 4.1H7.5L3.2 12.4z" fill="#29b6f6"/><path d="M5.4 14.6L8 12.4l4.7 4.1H7.5z" fill="#01579b"/><circle cx="11.5" cy="14" r="2.6" fill="#00e000"/></svg>
<div class="t" style="left:1358px;top:378px;font-size:13px;color:#bbbbbb;transform-origin:0 0;transform:rotate(90deg)">Flutter Performance</div>
<svg style="left:1346px;top:535px;" width="14" height="13" viewBox="0 0 14 13"><rect x="0.7" y="0.7" width="7" height="11.5" fill="none" stroke="#afb1b3" stroke-width="1.3"/><rect x="8.5" y="0.5" width="5" height="5" fill="none" stroke="#a57bd1" stroke-width="1.2"/></svg>
<div class="t" style="left:1358px;top:554px;font-size:13px;color:#bbbbbb;transform-origin:0 0;transform:rotate(90deg)">Android Emulator</div>
<svg style="left:1346px;top:677px;" width="13" height="16" viewBox="0 0 13 16"><rect x="0.8" y="0.8" width="11.4" height="14.4" rx="1.5" fill="none" stroke="#afb1b3" stroke-width="1.5"/><path d="M4 12.5h5" stroke="#afb1b3" stroke-width="1.5"/></svg>
<div class="t" style="left:1358px;top:696px;font-size:13px;color:#bbbbbb;transform-origin:0 0;transform:rotate(90deg)">Device File Explorer</div>
</div></div>
<div class="a" style="left:1327px;top:617px;width:11px;height:95px;background:#4a4c4e;"></div>
<div class="a" style="left:902px;top:605px;width:429px;height:98px;background:#4e5052;"></div>
<svg style="left:919px;top:614px;" width="11" height="19" viewBox="0 0 11 19"><path d="M6 0L0.5 10.5H5L3.5 19L10.5 7.5H6.5L8 0z" fill="#f4af3d"/></svg>
<div class="t " style="left:942px;top:619.33px;font-size:14.5px;color:#bbbbbb;font-weight:bold;">Flutter Hot Reload</div>
<div class="t " style="left:942px;top:644.49px;font-size:15.6px;color:#bbbbbb;font-weight:normal;">Apply changes?</div>
<div class="t " style="left:942px;top:676.24px;font-size:14.6px;color:#589df6;font-weight:normal;">Learn more</div>
<div class="a" style="left:983px;top:86px;width:287px;height:600px;border-radius:30px 30px 28px 28px;background:linear-gradient(#9a9a9a 0px,#6e6e6e 30px,#666 200px,#4a4a4a 420px,#222 540px,#111 600px);box-shadow:0 1px 2px rgba(0,0,0,0.5)"></div>
<div class="a" style="left:985.5px;top:88.5px;width:282px;height:596px;border-radius:28px 28px 27px 27px;background:#000;box-shadow:inset 0 0 0 1px #1a1a1a"></div>
<div class="a" style="left:987px;top:90px;width:279px;height:594px;border-radius:27px 27px 26px 26px;background:linear-gradient(#000 0px,#000 555px,#111 580px,#1c1c1c 594px)"></div>
<div class="a" style="left:1005px;top:90px;width:245px;height:8px;border-radius:20px 20px 0 0;border-top:1px solid rgba(200,200,200,0.55)"></div>
<div class="a" style="left:1116px;top:100px;width:21px;height:6px;background:#151515;border-radius:3px"></div>
<div class="a" style="left:1073px;top:118px;width:109px;height:7px;background:#2a2a2a;border-radius:3.5px;box-shadow:inset 0 1px 1px #111"></div>
<div class="a" style="left:1027px;top:116px;width:13px;height:13px;border-radius:50%;background:radial-gradient(circle at 60% 62%,#9aa8f0 0px,#2a3470 1.5px,#0c0c28 3.5px,#141414 4.8px,#262626 6.5px)"></div>
<div class="a" style="left:1070px;top:652px;width:110px;height:7px;background:#1e1e1e;border-radius:3.5px;box-shadow:inset 0 1px 1px #0a0a0a, 0 1px 0 #2a2a2a"></div>
<div class="a" style="left:995px;top:153px;width:263px;height:437px;background:#fafafa;"></div>
<div class="a" style="left:995px;top:153px;width:263px;height:15px;background:#1970b6;"></div>
<div class="a" style="left:995px;top:168px;width:263px;height:36px;background:#2196f3;box-shadow:0 1px 2px rgba(0,0,0,0.25)"></div>
<div class="t " style="left:1005px;top:180.13px;font-size:12.6px;color:#ffffff;font-weight:normal;-webkit-text-stroke:0.5px #fff">Flutter Demo Home Page</div>
<div class="a" style="left:995px;top:153px;width:263px;height:51px;overflow:hidden"><div class="a" style="left:217.7px;top:-20px;width:100px;height:8px;background:rgba(138,50,70,0.9);transform:rotate(45deg);transform-origin:0 0;"></div><div class="t" style="left:237px;top:1.5px;font-size:6.5px;font-weight:bold;color:#fff;transform:rotate(45deg);transform-origin:0 0">  DEBUG</div></div>
<div class="t " style="left:1000px;top:155.87px;font-size:9.6px;color:#dfe9f5;font-weight:normal;">4:52</div>
<svg style="left:1025px;top:155px;" width="10" height="10" viewBox="0 0 10 10"><g transform="scale(0.625)"><polygon points="8.78,0.04 10.32,0.34 10.88,2.62 11.87,3.28 14.18,2.92 15.06,4.23 13.84,6.23 14.07,7.40 15.96,8.78 15.66,10.32 13.38,10.88 12.72,11.87 13.08,14.18 11.77,15.06 9.77,13.84 8.60,14.07 7.22,15.96 5.68,15.66 5.12,13.38 4.13,12.72 1.82,13.08 0.94,11.77 2.16,9.77 1.93,8.60 0.04,7.22 0.34,5.68 2.62,5.12 3.28,4.13 2.92,1.82 4.23,0.94 6.23,2.16 7.40,1.93" fill="#ffffff"/><circle cx="8" cy="8" r="2.6" fill="#1970b6"/></g></svg>
<svg style="left:1038px;top:155px;" width="9" height="10" viewBox="0 0 9 10"><g transform="scale(1.12)"><path d="M4 0L8 1.5V4.5C8 7 6 8.5 4 9 2 8.5 0 7 0 4.5V1.5z" fill="#fff"/><path d="M3 3l3 1.5-3 1.5z" fill="#1970b6"/></g></svg>
<svg style="left:1052px;top:155px;" width="8" height="10" viewBox="0 0 8 10"><path d="M2.5 0h5.5v10H0V2.5z" fill="#fff"/></svg>
<svg style="left:1225px;top:156px;" width="9" height="8" viewBox="0 0 9 8"><path d="M0 2.5A7 7 0 0 1 9 2.5L4.5 8z" fill="#fff"/></svg>
<svg style="left:1235px;top:155px;" width="8" height="9" viewBox="0 0 8 9"><path d="M8 0v9H0z" fill="none" stroke="#fff" stroke-width="1"/><path d="M5 4v5H0z" fill="#fff"/></svg>
<div class="a" style="left:1247px;top:155px;width:6px;height:9px;background:#ffffff;border-radius:1px"></div>
<div class="t " style="left:1037px;top:379.82px;font-size:8.95px;color:#6b6b6b;font-weight:normal;">You have pushed the button this many times:</div>
<div class="t " style="left:1119.5px;top:392.16px;font-size:20.6px;color:#737373;font-weight:normal;">0</div>
<div class="a" style="left:1212px;top:544px;width:35px;height:35px;border-radius:50%;background:#2196f3;box-shadow:0 2px 3px rgba(0,0,0,0.35)"></div>
<div class="a" style="left:1225px;top:561px;width:9px;height:1.5px;background:#ffffff;"></div>
<div class="a" style="left:1228.8px;top:557px;width:1.5px;height:9px;background:#ffffff;"></div>
<svg style="left:1044px;top:600px;" width="11" height="11" viewBox="0 0 11 11"><path d="M10.5 0.5V10.5L0.5 5.5z" fill="#fff"/></svg>
<div class="a" style="left:1121px;top:600px;width:10px;height:10px;border-radius:50%;background:#fff"></div>
<div class="a" style="left:1197px;top:600px;width:10px;height:10px;background:#ffffff;border-radius:1px"></div>
<div class="a" style="left:1269px;top:243px;width:4px;height:40px;background:#8a8a8a;border-radius:0 2px 2px 0"></div>
<div class="a" style="left:1269px;top:333px;width:4px;height:82px;background:#8a8a8a;border-radius:0 2px 2px 0"></div>
<div class="a" style="left:1277px;top:86px;width:65px;height:515px;background:#263238;border:1px solid #111"></div>
<div class="a" style="left:1292px;top:101px;width:8px;height:1.3px;background:#cccccc;"></div>
<svg style="left:1319px;top:97px;" width="9" height="9" viewBox="0 0 9 9"><path d="M0.5 0.5L8.5 8.5M8.5 0.5L0.5 8.5" stroke="#fff" stroke-width="1.4"/></svg>
<svg style="left:1299px;top:124px;" width="20" height="20" viewBox="0 0 20 20"><path d="M5.5 4.5A8 8 0 1 0 14.5 4.5" fill="none" stroke="#fff" stroke-width="2.2"/><path d="M10 0.5V9" stroke="#fff" stroke-width="2.2"/></svg>
<svg style="left:1299px;top:168px;" width="20" height="19" viewBox="0 0 20 19"><path d="M0 6h4l6-5.5v18L4 13H0z" fill="#fff"/><path d="M12.5 4.5a5.5 5.5 0 0 1 0 10" fill="none" stroke="#fff" stroke-width="1.6"/><path d="M14 1.5a8.5 8.5 0 0 1 0 16" fill="none" stroke="#fff" stroke-width="2"/></svg>
<svg style="left:1302px;top:213px;" width="14" height="17" viewBox="0 0 14 17"><path d="M0 5.5h3.5L9.5 0v17L3.5 11.5H0z" fill="#fff"/><path d="M11.5 5a4.5 4.5 0 0 1 0 7" fill="none" stroke="#fff" stroke-width="1.8"/></svg>
<svg style="left:1296px;top:253px;" width="26" height="26" viewBox="0 0 26 26"><g transform="rotate(-45 12.5 13.5)"><rect x="6.8" y="5.3" width="11.4" height="16.4" rx="1.6" fill="none" stroke="#fff" stroke-width="2.3"/></g><path d="M13 1.6A11.5 11.5 0 0 1 23.6 10.5" fill="none" stroke="#fff" stroke-width="1.5"/><path d="M10.8 1.6L14 -0.8V4z" fill="#fff"/></svg>
<svg style="left:1296px;top:297px;" width="26" height="26" viewBox="0 0 26 26"><g transform="rotate(45 12.5 13.5)"><rect x="6.8" y="5.3" width="11.4" height="16.4" rx="1.6" fill="none" stroke="#fff" stroke-width="2.3"/></g><path d="M12 1.6A11.5 11.5 0 0 0 1.4 10.5" fill="none" stroke="#fff" stroke-width="1.5"/><path d="M14.2 1.6L11 -0.8V4z" fill="#fff"/></svg>
<svg style="left:1299px;top:344px;" width="20" height="18" viewBox="0 0 20 18"><path d="M0 3.5h5l2-3h6l2 3h5V18H0z" fill="#fff"/><circle cx="10" cy="10" r="4" fill="#263238"/><circle cx="10" cy="10" r="2.3" fill="#fff"/></svg>
<svg style="left:1300px;top:389px;" width="18" height="18" viewBox="0 0 18 18"><circle cx="7" cy="7" r="5.8" fill="none" stroke="#fff" stroke-width="2"/><path d="M11.5 11.5L17 17" stroke="#fff" stroke-width="2.3"/><path d="M4 7h6M7 4v6" stroke="#fff" stroke-width="1.6"/></svg>
<svg style="left:1300px;top:433px;" width="16" height="17" viewBox="0 0 16 17"><path d="M14.5 1.5V15.5L1.5 8.5z" fill="none" stroke="#fff" stroke-width="2" stroke-linejoin="round"/></svg>
<svg style="left:1300px;top:477px;" width="17" height="17" viewBox="0 0 17 17"><circle cx="8.5" cy="8.5" r="7.3" fill="none" stroke="#fff" stroke-width="2"/></svg>
<svg style="left:1301px;top:522px;" width="16" height="16" viewBox="0 0 16 16"><rect x="1" y="1" width="14" height="14" fill="none" stroke="#fff" stroke-width="2"/></svg>
<div class="a" style="left:1300px;top:572px;width:5px;height:5px;border-radius:50%;background:#fff"></div>
<div class="a" style="left:1307px;top:572px;width:5px;height:5px;border-radius:50%;background:#fff"></div>
<div class="a" style="left:1314px;top:572px;width:5px;height:5px;border-radius:50%;background:#fff"></div>
</body></html>
